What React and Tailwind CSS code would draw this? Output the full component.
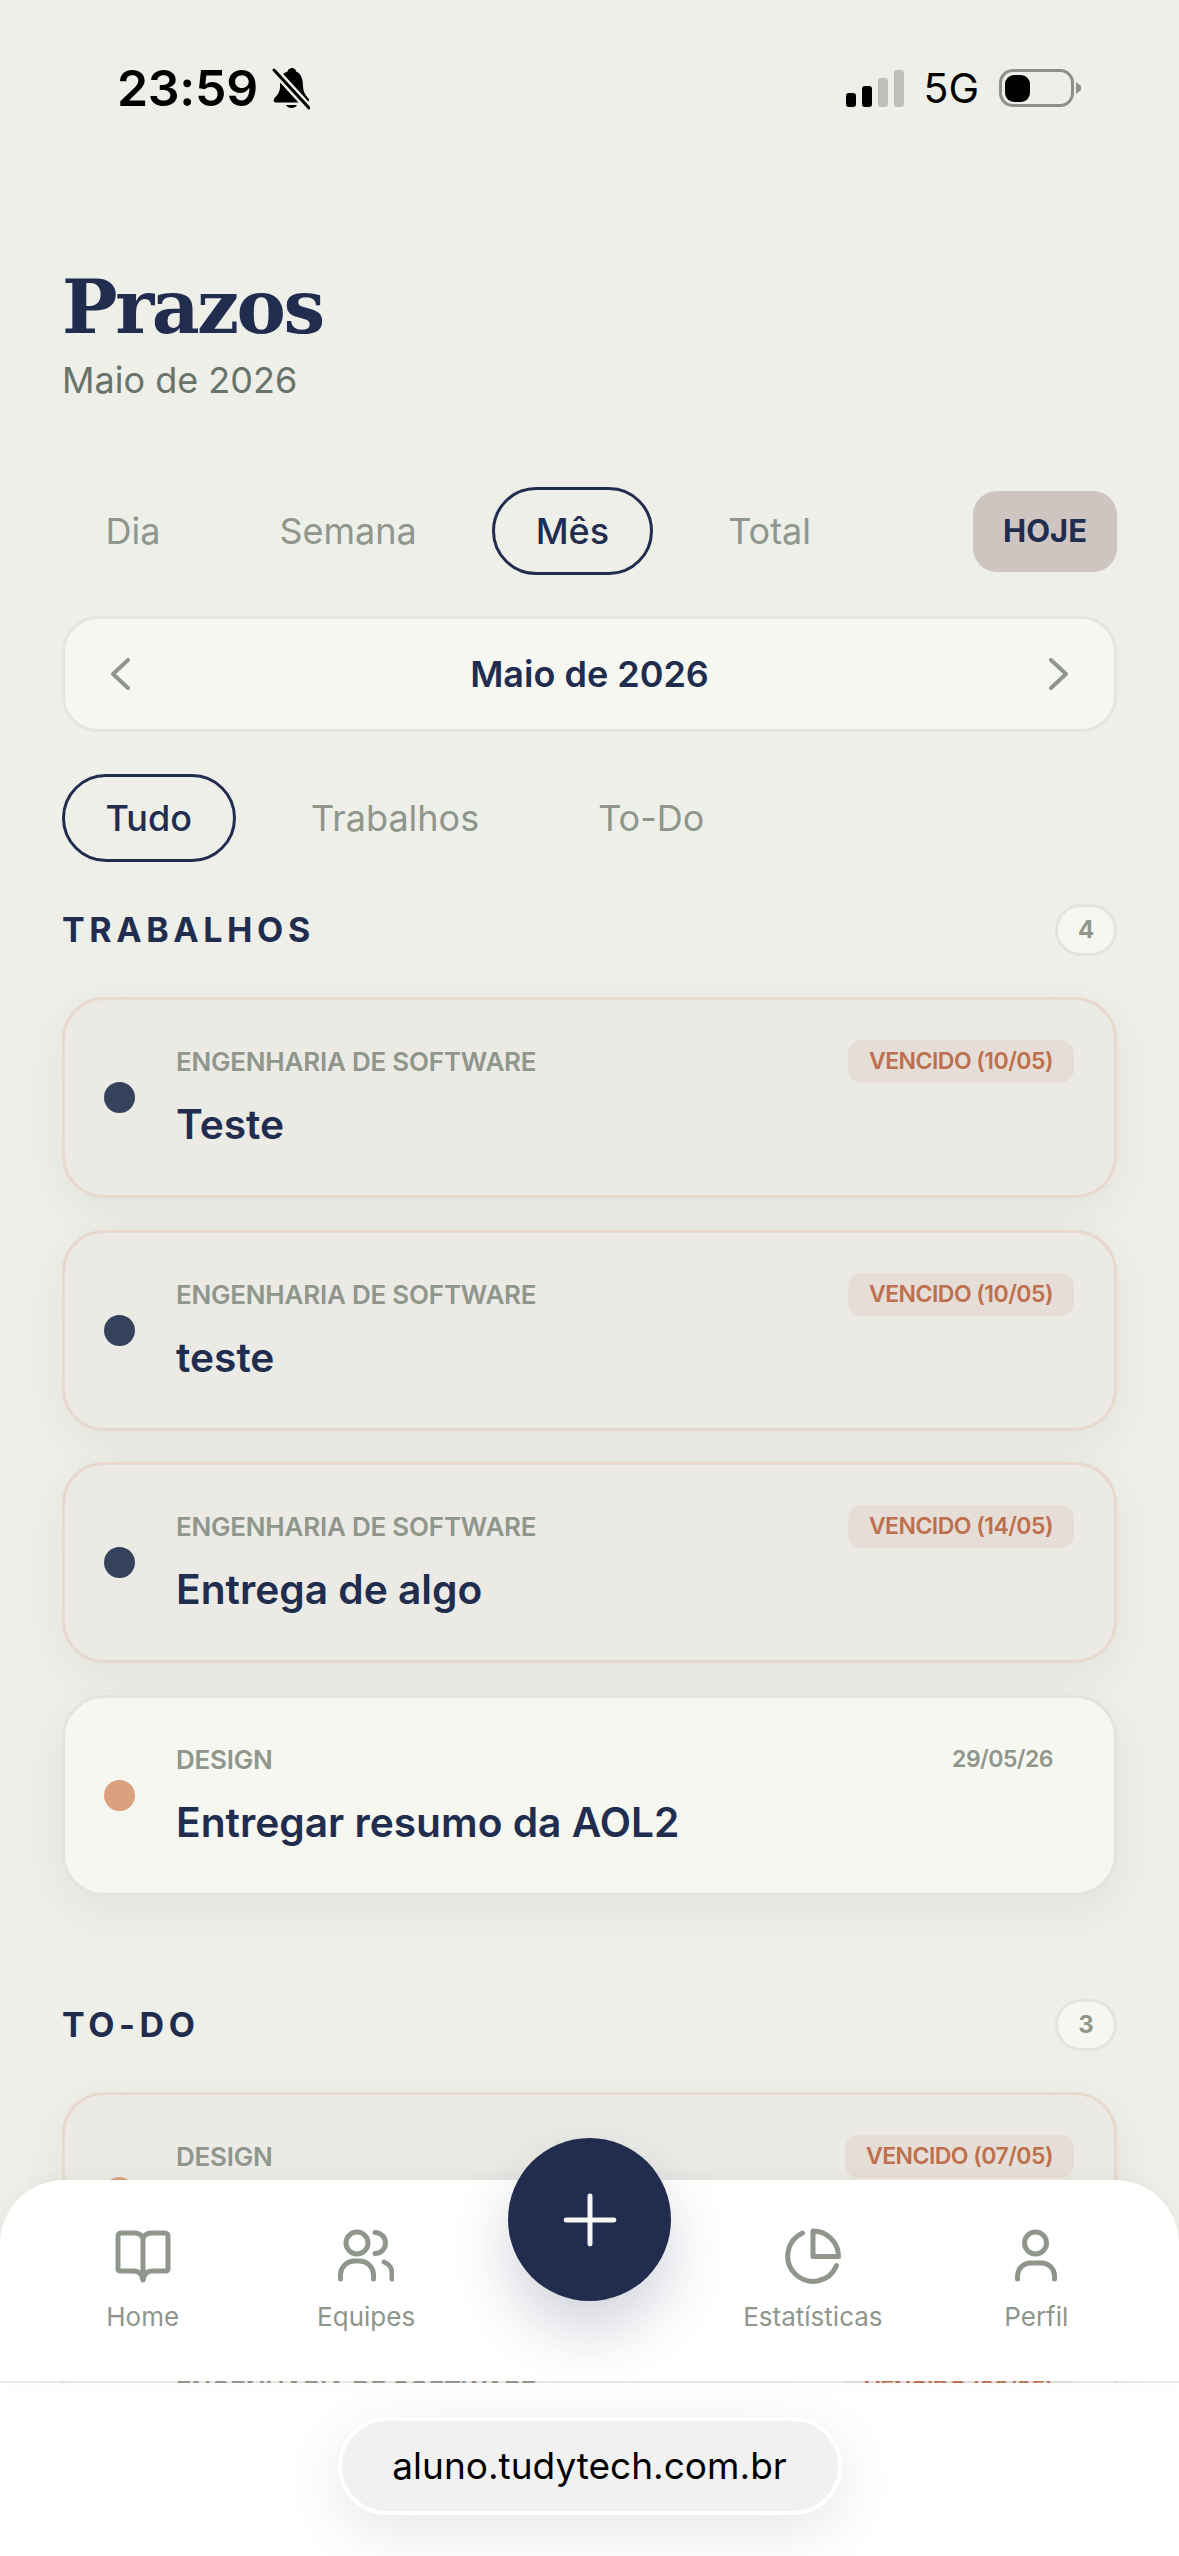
import { Plus } from 'lucide-react';

const periodTabs = ['Dia', 'Semana', 'Mês', 'Total'];
const filterTabs = ['Tudo', 'Trabalhos', 'To-Do'];

const trabalhos = [
  { id: 1, category: 'ENGENHARIA DE SOFTWARE', title: 'Teste', tag: 'VENCIDO (10/05)', overdue: true, dot: 'bg-[#34435b]' },
  { id: 2, category: 'ENGENHARIA DE SOFTWARE', title: 'teste', tag: 'VENCIDO (10/05)', overdue: true, dot: 'bg-[#34435b]' },
  { id: 3, category: 'ENGENHARIA DE SOFTWARE', title: 'Entrega de algo', tag: 'VENCIDO (14/05)', overdue: true, dot: 'bg-[#34435b]' },
  { id: 4, category: 'DESIGN', title: 'Entregar resumo da AOL2', tag: '29/05/26', overdue: false, dot: 'bg-[#dba17f]' },
];

const todos = [
  { id: 5, category: 'DESIGN', title: 'Revisar', tag: 'VENCIDO (07/05)', overdue: true, dot: 'bg-[#dba17f]' },
  { id: 6, category: 'ENGENHARIA DE SOFTWARE', title: 'Estudar', tag: 'VENCIDO (09/05)', overdue: true, dot: 'bg-[#34435b]' },
];

function StatusBar() {
  return (
    <div className="flex h-[263px] items-start justify-between pl-[117px] pr-[98px] pt-[60px]">
      <div className="flex items-center gap-[14px]">
        <span className="text-[50px] leading-[56px] font-semibold tracking-[-0.3px] text-black">23:59</span>
        <svg width="38" height="43" viewBox="0 0 38 43">
          <path d="M20 1c-2 0-4 1.500-4.500 3.500C9 6.500 8 13 8 20c0 6-4 9-6 12-1 2 0 3.500 2 3.500h30c3 0 4-2.500 2-4.500-3-3-5-7-5-12 0-7-2-13-7-14.500C24 2.500 22 1 20 1z" fill="#000" />
          <path d="M14 38a6 5 0 0 0 11 0z" fill="#000" />
          <path d="M2 3l35 38" stroke="#eeefe9" strokeWidth="8" />
          <path d="M2 3l35 38" stroke="#000" strokeWidth="3" strokeLinecap="round" />
        </svg>
      </div>
      <div className="flex items-center pt-[8px]">
        <div className="flex h-[37px] items-end gap-[6px]">
          <span className="h-[14px] w-[10px] rounded-[3px] bg-black" />
          <span className="h-[21px] w-[10px] rounded-[3px] bg-black" />
          <span className="h-[29px] w-[10px] rounded-[3px] bg-[#bfc0ba]" />
          <span className="h-[37px] w-[10px] rounded-[3px] bg-[#bfc0ba]" />
        </div>
        <span className="ml-[19px] text-[41px] leading-[40px] font-normal text-black">5G</span>
        <div className="ml-[20px] flex h-[38px] w-[75px] items-center rounded-[14px] border-[3.5px] border-[#8e8f8a] pl-[3px]">
          <span className="h-[27px] w-[25px] rounded-[9px] bg-black" />
        </div>
        <svg className="ml-[2px]" width="5" height="12" viewBox="0 0 5 12">
          <path d="M0 0l5 4v4l-5 4z" fill="#8e8f8a" />
        </svg>
      </div>
    </div>
  );
}

function PillTabs({ tabs, active }) {
  return (
    <div className="flex gap-[32px]">
      {tabs.map((tab) => (
        <div
          key={tab}
          className={`flex h-[88px] items-center rounded-[44px] border-[3.5px] px-[40.5px] text-[36px] ${
            tab === active ? 'border-[#212d4f] font-medium text-[#212d4f]' : 'border-transparent text-[#8f968b]'
          }`}
        >
          {tab}
        </div>
      ))}
    </div>
  );
}

function SectionHeader({ title, count }) {
  return (
    <div className="flex items-center justify-between">
      <h2 className="text-[34px] leading-[44px] font-bold tracking-[4.6px] text-[#212d4f]">{title}</h2>
      <span className="flex h-[52px] w-[62px] items-center justify-center rounded-full border-[3px] border-[#e3e4de] bg-[#f6f7f1] text-[24px] font-bold text-[#8f968b]">
        {count}
      </span>
    </div>
  );
}

function DeadlineCard({ item }) {
  return (
    <div
      className={`flex h-[201px] items-center gap-[41px] rounded-[42px] border-[3px] pl-[39px] pr-[40px] shadow-[0_14px_44px_rgba(60,64,50,0.07)] ${
        item.overdue ? 'border-[#e8d8cd] bg-[#ebeae5]' : 'border-[#e3e4de] bg-[#f6f7f1]'
      }`}
    >
      <span className={`h-[31px] w-[31px] shrink-0 rounded-full ${item.dot}`} />
      <div className="min-w-0 flex-1 pb-[6px]">
        <div className="flex items-center justify-between">
          <span className="text-[26px] font-semibold tracking-[-0.22px] text-[#8f968b]">{item.category}</span>
          <span
            className={`flex h-[43px] items-center rounded-[14px] px-[21px] text-[23px] font-semibold tracking-[-0.53px] ${
              item.overdue ? 'bg-[#e6ddd7] text-[#bd6f4e]' : 'text-[#8f968b]'
            }`}
          >
            {item.tag}
          </span>
        </div>
        <p className="mt-[18px] text-[40.7px] leading-[48px] font-semibold text-[#212d4f]">{item.title}</p>
      </div>
    </div>
  );
}

function BookIcon() {
  return (
    <svg width="56" height="54" viewBox="0 0 56 54" fill="none" stroke="#8f968b" strokeWidth="5" strokeLinecap="round" strokeLinejoin="round">
      <path d="M28 10c-1-4-4-6-9-6H6a3 3 0 0 0-3 3v33a2 2 0 0 0 2 2h14c5 0 8 3 9 9V10c1-4 4-6 9-6h13a3 3 0 0 1 3 3v33a2 2 0 0 1-2 2H37c-5 0-8 3-9 9" />
    </svg>
  );
}

function TeamIcon() {
  return (
    <svg width="56" height="54" viewBox="0 0 56 54" fill="none" stroke="#8f968b" strokeWidth="5" strokeLinecap="round" strokeLinejoin="round">
      <circle cx="19" cy="14" r="11" />
      <path d="M37 3.500a10.500 10.500 0 0 1 0 21" />
      <path d="M2.500 50v-5a14 14 0 0 1 14-13h5a14 14 0 0 1 14 13v5" />
      <path d="M46 33a12 12 0 0 1 8 12v5" />
    </svg>
  );
}

function PieIcon() {
  return (
    <svg width="56" height="56" viewBox="0 0 56 56" fill="none" stroke="#8f968b" strokeWidth="5" strokeLinecap="round" strokeLinejoin="round">
      <path d="M28 3a25.500 25.500 0 0 1 25.500 25.500H28z" />
      <path d="M17.500 5A25.300 25.300 0 1 0 51.500 37.500" />
    </svg>
  );
}

function UserIcon() {
  return (
    <svg width="42" height="54" viewBox="0 0 42 54" fill="none" stroke="#8f968b" strokeWidth="5" strokeLinecap="round" strokeLinejoin="round">
      <circle cx="20.500" cy="14" r="11" />
      <path d="M2.500 50v-3a13 13 0 0 1 13-13h11a13 13 0 0 1 13 13v3" />
    </svg>
  );
}

function NavItem({ icon, label }) {
  return (
    <div className="flex flex-col items-center">
      <div className="flex h-[54px] items-center justify-center">{icon}</div>
      <span className="mt-[19px] text-[26px] leading-[30px] text-[#8f968b]">{label}</span>
    </div>
  );
}

export default function App() {
  return (
    <div className="relative h-[2556px] w-[1179px] overflow-hidden bg-[#eeefe9] font-['Inter',sans-serif]">
      <StatusBar />

      <main className="px-[62px]">
        <h1 className="font-['DejaVu_Serif',serif] text-[74px] leading-[88px] font-bold tracking-[-2.500px] text-[#212d4f]">Prazos</h1>
        <p className="mt-[5px] text-[36px] leading-[48px] text-[#68736a]">Maio de 2026</p>

        <div className="mt-[83px] flex items-center justify-between">
          <PillTabs tabs={periodTabs} active="Mês" />
          <button className="flex h-[81px] w-[144px] items-center justify-center rounded-[24px] bg-[#cfc5c0] text-[31px] font-bold text-[#212d4f]">
            HOJE
          </button>
        </div>

        <div className="mt-[41px] flex h-[116px] items-center justify-between rounded-[36px] border-[3px] border-[#e5e6e0] bg-[#f6f7f1] px-[45px]">
          <svg width="20" height="32" viewBox="0 0 20 32" fill="none" stroke="#8f968b" strokeWidth="4" strokeLinecap="round" strokeLinejoin="round">
            <path d="M18 2L3 16l15 14" />
          </svg>
          <span className="text-[36px] font-semibold text-[#212d4f]">Maio de 2026</span>
          <svg width="20" height="32" viewBox="0 0 20 32" fill="none" stroke="#8f968b" strokeWidth="4" strokeLinecap="round" strokeLinejoin="round">
            <path d="M2 2l15 14L2 30" />
          </svg>
        </div>

        <div className="mt-[42px]">
          <PillTabs tabs={filterTabs} active="Tudo" />
        </div>

        <section className="mt-[42px]">
          <SectionHeader title="TRABALHOS" count={4} />
          <div className="mt-[41px] flex flex-col gap-[31.5px]">
            {trabalhos.map((item) => (
              <DeadlineCard key={item.id} item={item} />
            ))}
          </div>
        </section>

        <section className="mt-[103px]">
          <SectionHeader title="TO-DO" count={3} />
          <div className="mt-[41.5px] flex flex-col gap-[31.5px]">
            {todos.map((item) => (
              <DeadlineCard key={item.id} item={item} />
            ))}
          </div>
        </section>
      </main>

      <div className="absolute inset-x-0 bottom-0 flex flex-col gap-[2px]">
        <nav className="relative h-[201px] rounded-t-[64px] bg-white shadow-[0_-2px_16px_rgba(60,64,50,0.05)]">
          <div className="grid grid-cols-5 px-[31px] pt-[49px]">
            <NavItem icon={<BookIcon />} label="Home" />
            <NavItem icon={<TeamIcon />} label="Equipes" />
            <div />
            <NavItem icon={<PieIcon />} label="Estatísticas" />
            <NavItem icon={<UserIcon />} label="Perfil" />
          </div>
          <button className="absolute left-[508px] top-[-42px] flex h-[163px] w-[163px] items-center justify-center rounded-full bg-[#212d4f] shadow-[0_30px_60px_rgba(33,45,79,0.2)]">
            <Plus size={82} color="#f6f7f1" strokeWidth={1.45} />
          </button>
        </nav>

        <div className="flex h-[173px] justify-center bg-white pt-[34px]">
          <div className="flex h-[98px] w-[504px] items-center justify-center rounded-[49px] border-[4px] border-white bg-[#f1f1f1] text-[37px] text-black shadow-[0_16px_60px_rgba(0,0,0,0.1)]">
            aluno.tudytech.com.br
          </div>
        </div>
      </div>
    </div>
  );
}
